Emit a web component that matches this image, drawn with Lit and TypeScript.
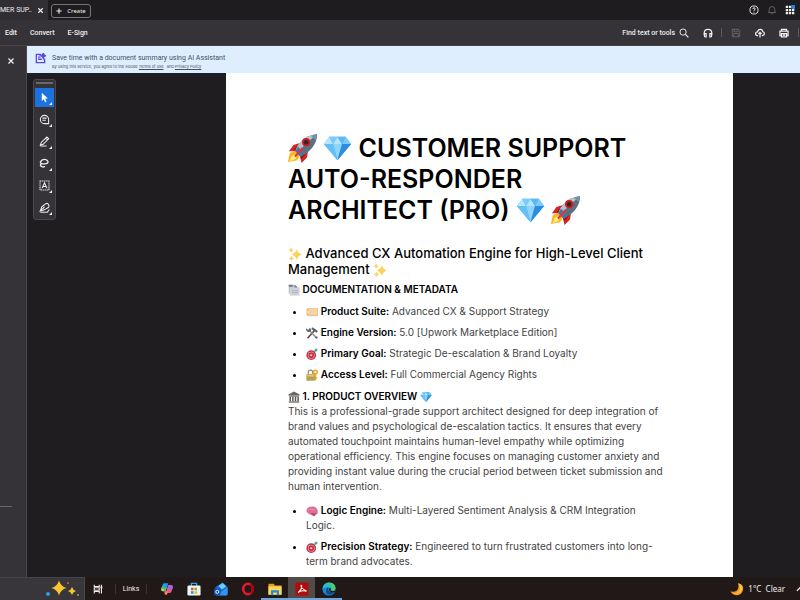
import { LitElement, html, css, svg, nothing, type TemplateResult } from "lit";
import { customElement } from "lit/decorators.js";
import { classMap } from "lit/directives/class-map.js";

const sparkle = (x: number, y: number, r: number, fill: string) => svg`
  <path fill=${fill} d=${`M${x} ${y - r}Q${x + r * 0.22} ${y - r * 0.22} ${x + r} ${y}Q${x + r * 0.22} ${y + r * 0.22} ${x} ${y + r}Q${x - r * 0.22} ${y + r * 0.22} ${x - r} ${y}Q${x - r * 0.22} ${y - r * 0.22} ${x} ${y - r}Z`}/>`;

const emoji: Record<string, TemplateResult> = {
  rocket: svg`
    <path fill="#ffb21c" d="M8 19L2 21 0 31 10 29 13 24Z"/>
    <path fill="#fff08a" d="M9 22L4 24 2 30 9 27Z"/>
    <path fill="#d7261e" d="M13 10L6 12 1 19 9 19ZM22 19L21 26 15 32 13 24Z"/>
    <path fill="#a5130f" d="M10 13L6 18 9 19 12 14ZM20 21L15 28 13 24Z"/>
    <path fill="#5b6f80" d="M8 19C11 10 18 2 32 0 32 12 24 20 14 25Z"/>
    <path fill="#b4c3cf" d="M8 19C11 10 18 2 32 0 24 7 17 13 10 21Z"/>
    <path fill="#3f78b5" d="M8 19L11 14 18 21 14 25Z"/>
    <path fill="#78909f" d="M25 2L32 0 31 7Z"/>
    <circle cx="20" cy="9" r="4.5" fill="#cc1f1b"/>
    <circle cx="20" cy="9" r="2.5" fill="#30252a"/>
    <path fill="#e4382c" d="M15 15L17 17 8 26 7 24Z"/>`,
  gem: svg`
    <path fill="#45aef0" d="M7 3H25L31 11 16 29 1 11Z"/>
    <path fill="#b5e6ff" d="M7 3L11 11H1ZM16 3L21 11H11Z"/>
    <path fill="#7ccbfa" d="M7 3H16L11 11ZM25 3L31 11H21Z"/>
    <path fill="#5cb9f5" d="M16 3H25L21 11Z"/>
    <path fill="#8fd4fb" d="M11 11H21L16 29Z"/>
    <path fill="#2c8de0" d="M21 11H31L16 29Z"/>
    <path fill="#63c0f7" d="M1 11H11L16 29Z"/>`,
  sparkles: svg`${sparkle(20, 17, 12, "#f8d35e")}${sparkle(7, 7, 6, "#f8d35e")}${sparkle(8, 26, 6, "#f8d35e")}`,
  pages: svg`
    <path fill="#b9bbc3" d="M2 2H18L24 8V25H2Z"/>
    <path fill="#d0d2da" d="M5 9H31V31H5Z"/>
    <path fill="#777b89" d="M2 2H12V7H2ZM18 2L26 9H18Z"/>
    <path stroke="#a9acb8" stroke-width="2" d="M10 18H27M10 23H27"/>`,
  label: svg`
    <path fill="#efc28f" d="M1 9L5 5H32V27H5L1 23Z"/>
    <path fill="#f7d3a5" d="M9 7H30V23H9Z"/>
    <circle cx="6" cy="16" r="2" fill="#fff"/>`,
  tools: svg`
    <path stroke="#6a4332" stroke-width="4" d="M4 30L23 9"/>
    <path stroke="#555e66" stroke-width="5" d="M16 3L30 13"/>
    <path stroke="#89939c" stroke-width="4" d="M8 8L28 29"/>
    <path fill="#59636c" d="M1 3L5 7 9 6 9 1 14 6 12 12 5 13 0 8Z"/>
    <circle cx="28" cy="28" r="3" fill="#59636c"/>`,
  dart: svg`
    <circle cx="14" cy="19" r="13" fill="#c92c3d"/>
    <circle cx="14" cy="19" r="9" fill="#ecc9ce"/>
    <circle cx="14" cy="19" r="7.500" fill="#c92c3d"/>
    <circle cx="14" cy="19" r="3" fill="#f1dfe1"/>
    <path stroke="#59646c" stroke-width="2" d="M14 19L26 7"/>
    <path fill="#38a7a0" d="M22 9L23 4 28 0 28 4 32 4 28 9Z"/>`,
  lock: svg`
    <path fill="none" stroke="#8e8b79" stroke-width="3" d="M6 15V9Q6 3 12 3T18 9V15"/>
    <rect x="1" y="13" width="23" height="18" rx="2" fill="#b9a055"/>
    <path fill="#ddca83" d="M3 15H22V20H3Z"/>
    <circle cx="25" cy="8" r="5" fill="none" stroke="#e9a51b" stroke-width="4"/>
    <path stroke="#e9a51b" stroke-width="4" d="M25 12V30M25 24H30"/>`,
  temple: svg`
    <path fill="#696761" d="M16 1L31 9V12H1V9Z"/>
    <path fill="#827f76" d="M3 12H29V15H3ZM2 27H30V31H2Z"/>
    <path stroke="#5c5a55" stroke-width="4" d="M6 15V27M13 15V27M20 15V27M27 15V27"/>`,
  brain: svg`
    <path fill="#de6f94" d="M2 18C-1 12 6 4 13 5 20 1 32 7 31 16 34 23 27 27 20 25 13 28 6 25 2 18Z"/>
    <path fill="#b9446e" d="M12 22L28 22 23 30 16 27Z"/>
    <path fill="none" stroke="#f3a4bb" stroke-width="2" d="M6 14Q10 9 15 12T24 10"/>`,
};

const glyph: Record<string, TemplateResult> = {
  close: svg`<path d="M4 4L12 12M12 4L4 12" stroke-width="2"/>`,
  plus: svg`<path d="M8 1V15M1 8H15" stroke-width="3"/>`,
  help: svg`<circle cx="8" cy="8" r="6.500"/><path d="M6 6.300Q6 4.500 8 4.500T10 6.300Q10 7.300 8 8.300V9.300M8 10.600V12"/>`,
  bell: svg`<path d="M2 12H14L12.500 10V7Q12.500 2.500 8 2.500T3.500 7V10ZM6.500 14H9.500"/>`,
  apps: svg`<path stroke-width="3.600" d="M1.200 3H4.900M6.200 3H9.900M11.200 3H14.900M1.200 8H4.900M6.200 8H9.900M11.200 8H14.900M1.200 13H4.900M6.200 13H9.900M11.200 13H14.900"/><circle cx="13" cy="3" r="3.500" fill="#2585ee" stroke="none"/>`,
  search: svg`<circle cx="6.500" cy="6.500" r="5"/><path d="M10.200 10.200L15 15" stroke-width="2"/>`,
  audio: svg`<path d="M2 10V8Q2 2 8 2T14 8V10" stroke-width="2"/><path d="M2.200 9H5V14H3.500Q2.200 14 2.200 12.500ZM13.800 9H11V14H12.500Q13.800 14 13.800 12.500Z" stroke-width="2"/>`,
  save: svg`<path d="M2 2H12L14 4V14H2ZM5 2V6H11V2M4.500 14V9H11.500V14"/>`,
  cloud: svg`<path stroke-width="2" d="M5 12H4Q1 12 1 9T4 6Q5 2 8.500 2T12.500 6Q15 6.500 15 9T12 12H11M8 15V7M5.500 9.500L8 7 10.500 9.500"/>`,
  print: svg`<path stroke-width="2" d="M4 5V2H12V5M4 12H1.500V5H14.500V12H12M4 9H12V14H4ZM6 11.500H10"/>`,
  arrow: svg`<path fill="#fff" stroke="none" d="M4 1L13 9.500H9L11 14 9 15 7 10.500 4 13Z"/>`,
  comment: svg`<path d="M14 14H8A6 6 0 1 1 14 8ZM5 6H11M5 9H10"/>`,
  pencil: svg`<path d="M2 13L3.500 9 11.500 1.500 14 4 6 12ZM2 14.500H11M10 3L12.500 5.500"/>`,
  lasso: svg`<path stroke-width="2" d="M13 5Q12 2 8 2T2 6Q2 9 8 8.500T13 5M4 8Q0 11 4 12.500T8 11.500"/>`,
  textbox: svg`<path stroke-dasharray="2 1" d="M1.500 1.500H14.500V14.500H1.500Z"/><path d="M4.500 12L8 4 11.500 12M6 9.500H10"/>`,
  sign: svg`<path d="M2 13L4 7 8 4Q12 0 14 4T10 10L6 12 2 13 8 7M2 15H12L15 11"/>`,
  taskview: svg`<path d="M2 1V4H10V1M2 15V12H10V15M2 6H10V10H2ZM13.500 1V15" stroke-width="1.700"/><path stroke-width="3" d="M12 5.500H15"/>`,
  up: svg`<path d="M3 11L8 6 13 11" stroke-width="2"/>`,
};

const appIcon: Record<string, TemplateResult> = {
  Copilot: svg`
    <path fill="#1c9cf0" d="M10 3H19L13 21H7Q2 21 3 15L6 6Q7 3 10 3Z"/>
    <path fill="#36c485" d="M3 15L5 9 15 13 13 21H7Q2 21 3 15Z"/>
    <path fill="#f6bb28" d="M3 15L10 16 8 21H7Q2 21 3 15Z"/>
    <path fill="#ed587e" d="M22 25H13L19 7H25Q30 7 29 13L26 22Q25 25 22 25Z"/>
    <path fill="#a564e8" d="M29 13L28 17 17 15 19 7H25Q30 7 29 13Z"/>
    <path fill="#ff8354" d="M10 21H18L16 29H13Q10 29 10 21Z"/>`,
  Store: svg`
    <path fill="none" stroke="#31a8df" stroke-width="3" d="M10 9V3H22V9"/>
    <rect x="1" y="8" width="30" height="23" rx="3" fill="#eff4f7"/>
    <path fill="#ef513c" d="M9 13H15V19H9Z"/><path fill="#7eb72f" d="M17 13H23V19H17Z"/>
    <path fill="#169fe3" d="M9 21H15V27H9Z"/><path fill="#f9b51a" d="M17 21H23V27H17Z"/>`,
  Outlook: svg`
    <path fill="#1d67cf" d="M3 12L19 1 31 11V30H3Z"/>
    <path fill="#69cffb" d="M10 9L20 2 28 10 18 17Z"/>
    <path fill="#3393ef" d="M5 30L31 12V27Q31 31 27 31H7Z"/>
    <rect x="0" y="15" width="15" height="15" rx="3" fill="#1154b7"/>
    <circle cx="7.500" cy="22.500" r="3.500" fill="none" stroke="#fff" stroke-width="2"/>`,
  Opera: svg`<ellipse cx="16" cy="16" rx="11" ry="12" fill="none" stroke="#e51b2b" stroke-width="6"/><path fill="#a70014" d="M19 3Q30 5 30 16T19 29Q24 23 24 16T19 3Z"/>`,
  Files: svg`<path fill="#dba323" d="M1 4H13L16 8H31V29H1Z"/><path fill="#ffd65a" d="M1 10H31V29H1Z"/><path fill="#2389d7" d="M7 19H25V30H20V24H12V30H7Z"/>`,
  Acrobat: svg`<rect x="1" y="1" width="30" height="30" rx="3" fill="#b30b0b"/><path fill="none" stroke="#fff" stroke-width="2.500" d="M7 24C12 21 17 12 15 8 13 5 12 14 25 20 28 23 15 16 7 24Z"/>`,
  Edge: svg`
    <circle cx="16" cy="16" r="15" fill="#1588d3"/>
    <path fill="#51ca69" d="M2 13Q5 1 17 1 31 2 31 14 30 21 21 20 23 9 2 13Z"/>
    <path fill="#29b9d5" d="M1 16Q3 4 14 4 25 6 21 15 12 7 1 16Z"/>
    <path fill="#0b4c91" d="M10 17Q10 12 15 12 11 24 27 24 20 33 11 27 8 23 10 17Z"/>
    <path fill="#241a18" d="M16 14Q23 13 19 19 21 22 31 20L28 24Q15 25 16 14Z"/>`,
};

const face = (name: string) => html`<svg class="emoji" viewBox="0 0 32 32" aria-hidden="true">${emoji[name]}</svg>`;
const icon = (name: string) => html`<svg class="icon" viewBox="0 0 16 16" aria-hidden="true">${glyph[name]}</svg>`;

interface Fact { icon: string; name: string; text: string; }

const metadata: Fact[] = [
  { icon: "label", name: "Product Suite:", text: "Advanced CX & Support Strategy" },
  { icon: "tools", name: "Engine Version:", text: "5.0 [Upwork Marketplace Edition]" },
  { icon: "dart", name: "Primary Goal:", text: "Strategic De-escalation & Brand Loyalty" },
  { icon: "lock", name: "Access Level:", text: "Full Commercial Agency Rights" },
];
const overview: Fact[] = [
  { icon: "brain", name: "Logic Engine:", text: "Multi-Layered Sentiment Analysis & CRM Integration Logic." },
  { icon: "dart", name: "Precision Strategy:", text: "Engineered to turn frustrated customers into long-term brand advocates." },
];

const shared = css`
  :host, * { box-sizing: border-box; }
  button { font: inherit; color: inherit; background: none; border: 0; padding: 0; margin: 0; display: flex; align-items: center; justify-content: center; white-space: nowrap; }
  .icon { width: 10px; height: 10px; flex: none; display: block; fill: none; stroke: currentColor; stroke-width: 1.5; }
`;

@customElement("pdf-page")
class PdfPage extends LitElement {
  static styles = [shared, css`
    :host { display: block; background: #fff; color: #434343; padding: 60px 68px 0 62px; overflow: hidden; font: 10px/15px Inter, sans-serif; }
    h1, h2, h3, p, ul { margin: 0; }
    h1 { font-size: 25px; line-height: 31px; font-weight: 600; color: #000; margin-bottom: 19px; }
    h2 { font-size: 13px; line-height: 16px; font-weight: 500; color: #000; margin-bottom: 4px; }
    h3 { font-size: 10px; line-height: 16px; font-weight: 600; color: #000; }
    ul { padding-left: 18px; margin: 7px 0 6px; }
    p + ul { margin-top: 9px; }
    li { margin-bottom: 6px; }
    li::marker { color: #000; }
    strong { font-weight: 600; color: #000; }
    .emoji { width: 12px; height: 12px; vertical-align: -3px; }
    h1 .emoji { width: 29px; height: 29px; vertical-align: -6px; }
    h2 .emoji { width: 14px; height: 14px; }
  `];

  private list(facts: Fact[]) {
    return html`<ul>${facts.map((f) => html`<li>${face(f.icon)} <strong>${f.name}</strong> ${f.text}</li>`)}</ul>`;
  }

  render() {
    return html`
      <h1>${face("rocket")} ${face("gem")} CUSTOMER SUPPORT AUTO-RESPONDER ARCHITECT (PRO) ${face("gem")} ${face("rocket")}</h1>
      <h2>${face("sparkles")} Advanced CX Automation Engine for High-Level Client Management ${face("sparkles")}</h2>
      <h3>${face("pages")} DOCUMENTATION &amp; METADATA</h3>
      ${this.list(metadata)}
      <h3>${face("temple")} 1. PRODUCT OVERVIEW ${face("gem")}</h3>
      <p>This is a professional-grade support architect designed for deep integration of brand values and psychological de-escalation tactics. It ensures that every automated touchpoint maintains human-level empathy while optimizing operational efficiency. This engine focuses on managing customer anxiety and providing instant value during the crucial period between ticket submission and human intervention.</p>
      ${this.list(overview)}`;
  }
}

@customElement("task-bar")
class TaskBar extends LitElement {
  static styles = [shared, css`
    :host { display: flex; align-items: stretch; height: 23px; background: #211917; color: #eee; font: 7px/10px Roboto, sans-serif; flex: none; }
    .widget { width: 85px; background: #38363a; border-top: 1px solid #464448; border-right: 1px solid #4c494c; justify-content: flex-end; padding-right: 4px; }
    .widget svg { width: 36px; height: 18px; }
    .view { width: 26px; }
    .links { width: 32px; margin: 0 6px 0 4px; }
    .links span { border: solid #3d3431; border-width: 0 1px; padding: 0 7px; }
    .app { width: 27px; border-bottom: 2px solid transparent; padding-top: 2px; }
    .app svg { width: 14px; height: 14px; }
    .open { border-bottom-color: #6fa5d8; }
    .current { background: #514b49; }
    .tray { margin-left: auto; display: flex; align-items: center; }
    .weather { gap: 4px; font: 8px/10px "Noto Sans", sans-serif; margin-right: 10px; }
    .weather svg { width: 14px; height: 14px; }
    .more { width: 5px; overflow: hidden; justify-content: flex-start; }
  `];

  render() {
    return html`
      <button class="widget" aria-label="Highlights">
        <svg viewBox="0 0 36 18">${sparkle(15, 8, 7.5, "#f8c52c")}${sparkle(28, 11, 4, "#f8c52c")}
          <circle cx="4" cy="14" r="2" fill="#26a4df"/><circle cx="24" cy="3" r="1" fill="#e65a38"/><circle cx="34" cy="15" r="1" fill="#76b83f"/></svg>
      </button>
      <button class="view" aria-label="Task view">${icon("taskview")}</button>
      <button class="links"><span>Links</span></button>
      ${Object.keys(appIcon).map((name) => html`
        <button class=${classMap({ app: true, open: ["Files", "Acrobat", "Edge"].includes(name), current: name === "Acrobat" })} aria-label=${name}>
          <svg viewBox="0 0 32 32">${appIcon[name]}</svg>
        </button>`)}
      <div class="tray">
        <button class="weather">
          <svg viewBox="0 0 32 32"><path fill="#f39b25" d="M18 2Q32 5 30 17 27 31 14 30 5 29 1 21 12 25 18 17 22 10 18 2Z"/><path fill="#ffc64b" d="M20 4Q30 8 27 18 22 28 8 26 20 26 23 16Z"/></svg>
          <span>1°C&nbsp; Clear</span>
        </button>
        <button class="more" aria-label="Show hidden icons">${icon("up")}</button>
      </div>`;
  }
}

@customElement("app-root")
class AppRoot extends LitElement {
  static styles = [shared, css`
    :host { display: flex; flex-direction: column; height: 100vh; overflow: hidden; background: #1f1d20; color: #eee; font: 7px/10px Roboto, sans-serif; }
    header { display: flex; align-items: center; height: 20px; background: #1e1c1f; flex: none; }
    .tab { display: flex; align-items: center; align-self: stretch; width: 48px; background: #302e32; overflow: hidden; white-space: nowrap; }
    .tab span { flex: 1; }
    .tab button { width: 15px; }
    .tab .icon { width: 9px; height: 9px; }
    .create { height: 14px; width: 40px; gap: 5px; margin: 1px 0 0 3px; border: 1px solid #777579; border-radius: 3px; font: 6px/10px "Noto Sans", sans-serif; }
    .create .icon { width: 6px; height: 6px; }
    .right { margin-left: auto; display: flex; align-items: center; gap: 8px; padding-right: 5px; }
    .dim { color: #66646a; }
    .bar { display: flex; align-items: center; height: 26px; padding-left: 5px; background: #353337; border-bottom: 1px solid #454347; flex: none; font-weight: 500; }
    .menu { display: flex; gap: 13px; }
    .actions { margin-left: auto; display: flex; align-items: center; gap: 14px; }
    .find { gap: 4px; }
    .rule { width: 1px; height: 9px; background: #5b595d; margin: 0 -5px 0 -6px; }
    .rule.last { margin: 0 1px 0 -5px; }
    main { display: flex; flex: 1; min-height: 0; }
    aside { width: 27px; flex: none; background: #353337; border-right: 1px solid #4a484c; display: flex; flex-direction: column; justify-content: space-between; align-items: flex-start; padding: 10px 0 70px 6px; }
    aside hr { width: 12px; margin: 0 0 0 -6px; border: 0; border-top: 1px solid #69676b; }
    .view { flex: 1; min-width: 0; display: flex; flex-direction: column; }
    .banner { height: 27px; background: #deeeff; color: #45515f; display: flex; align-items: flex-start; gap: 6px; padding: 7px 8px 0; flex: none; }
    .banner .icon { width: 11px; height: 11px; color: #5b49dc; }
    .banner p { margin: 0; line-height: 11px; }
    .banner small { display: block; font: 4px/6px Inter, sans-serif; }
    .banner a { color: inherit; margin-right: 2px; }
    .canvas { flex: 1; min-height: 0; display: flex; padding-right: 67px; }
    .side { width: 199px; flex: none; padding: 6px; }
    .tools { width: 23px; height: 141px; background: #353337; border: 1px solid #4b494d; border-radius: 3px; padding: 8px 1px 0 1px; display: flex; flex-direction: column; gap: 3px; align-items: center; background-image: linear-gradient(#69676b, #69676b); background-size: 17px 2px; background-position: 2px 2px; background-repeat: no-repeat; }
    .tool { position: relative; width: 19px; height: 19px; }
    .tool .icon { width: 11px; height: 11px; }
    .tool::after { content: ""; position: absolute; right: 2px; bottom: 2px; border: solid transparent; border-width: 0 0 3px 3px; border-bottom-color: #eee; }
    .chosen { background: #1b73e0; }
    pdf-page { flex: 1; min-width: 0; }
  `];

  private tool(name: string, chosen = false) {
    return html`<button class=${classMap({ tool: true, chosen })} aria-label=${name} aria-pressed=${chosen ? "true" : nothing}>${icon(name)}</button>`;
  }

  render() {
    return html`
      <header>
        <div class="tab"><span>MER SUP..</span><button aria-label="Close tab">${icon("close")}</button></div>
        <button class="create">${icon("plus")}<span>Create</span></button>
        <div class="right">
          <button aria-label="Help">${icon("help")}</button>
          <button class="dim" aria-label="Notifications">${icon("bell")}</button>
          <button aria-label="Apps">${icon("apps")}</button>
        </div>
      </header>
      <div class="bar">
        <nav class="menu"><button>Edit</button><button>Convert</button><button>E-Sign</button></nav>
        <div class="actions">
          <button class="find"><span>Find text or tools</span>${icon("search")}</button>
          <button aria-label="Read aloud">${icon("audio")}</button>
          <span class="rule"></span>
          <button class="dim" aria-label="Save">${icon("save")}</button>
          <button aria-label="Upload">${icon("cloud")}</button>
          <button aria-label="Print">${icon("print")}</button>
          <span class="rule last"></span>
        </div>
      </div>
      <main>
        <aside><button aria-label="Close panel">${icon("close")}</button><hr></aside>
        <div class="view">
          <div class="banner">
            <svg class="icon" viewBox="0 0 16 16"><path stroke-width="2" d="M9 2H2V14H14V8M4.500 6H8M4.500 9H10"/>${sparkle(12, 4, 4, "#5b49dc")}</svg>
            <div>
              <p>Save time with a document summary using AI Assistant</p>
              <small>By using this service, you agree to the Adobe <a href="#terms">Terms of use</a> and <a href="#privacy">Privacy Policy</a></small>
            </div>
          </div>
          <div class="canvas">
            <div class="side">
              <div class="tools">
                ${this.tool("arrow", true)}${this.tool("comment")}${this.tool("pencil")}
                ${this.tool("lasso")}${this.tool("textbox")}${this.tool("sign")}
              </div>
            </div>
            <pdf-page></pdf-page>
          </div>
        </div>
      </main>
      <task-bar></task-bar>`;
  }
}
